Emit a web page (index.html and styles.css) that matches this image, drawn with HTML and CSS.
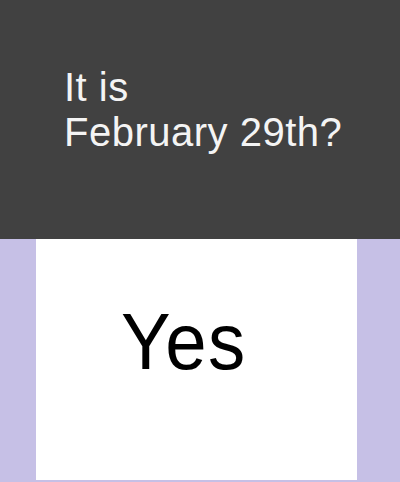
FILE: index.html
```html
<!DOCTYPE html>
<html>
<head>
<meta charset="utf-8">
<link rel="stylesheet" href="styles.css">
</head>
<body>
<div class="screen">
  <div class="top">
    <p class="question">It is<br>February 29th?</p>
  </div>
  <div class="bottom">
    <div class="card">
      <span class="answer">Yes</span>
    </div>
  </div>
</div>
</body>
</html>
```
FILE: styles.css
```css
html, body {
  margin: 0;
  padding: 0;
}
body {
  width: 400px;
  height: 482px;
  overflow: hidden;
  font-family: "Liberation Sans", Arial, sans-serif;
}
.screen {
  display: flex;
  flex-direction: column;
  width: 400px;
  height: 482px;
}
.top {
  height: 239px;
  background: #414141;
  padding: 65px 0 0 64px;
  box-sizing: border-box;
}
.question {
  margin: 0;
  color: #f4f4f4;
  font-size: 40px;
  line-height: 45px;
  letter-spacing: 0.5px;
}
.bottom {
  flex: 1;
  background: #c6c0e6;
  padding: 0 43px 2px 36px;
  display: flex;
}
.card {
  flex: 1;
  background: #ffffff;
  padding: 63px 0 0 85px;
  box-sizing: border-box;
}
.answer {
  display: inline-block;
  color: #000;
  font-size: 80px;
  line-height: 80px;
  letter-spacing: 1.5px;
  transform: scaleX(0.93);
  transform-origin: left top;
}
```
